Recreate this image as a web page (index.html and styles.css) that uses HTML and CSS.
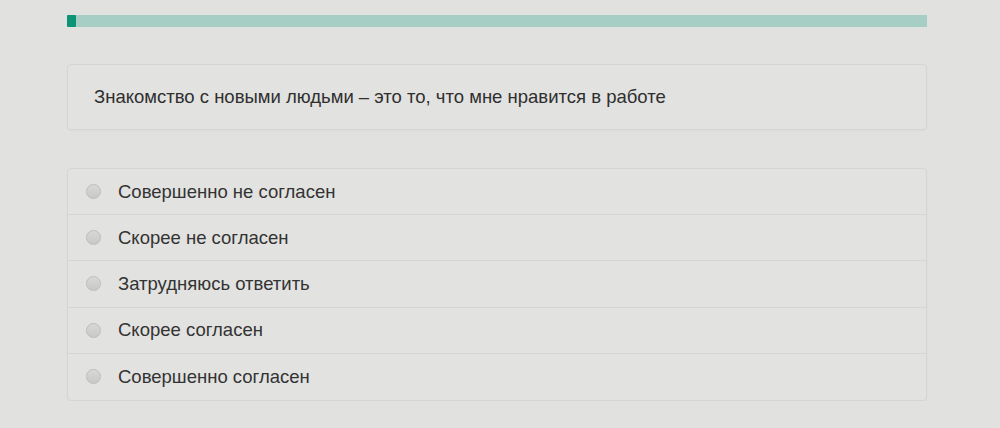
FILE: index.html
```html
<!DOCTYPE html>
<html lang="ru">
<head>
    <meta charset="UTF-8">
    <meta name="viewport" content="width=device-width, initial-scale=1.0">
    <title>Тест</title>
    <link rel="stylesheet" href="styles.css">
</head>
<body>
    <div class="main-container">
        <div class="progress">
            <div class="progress-bar" style="width: 1%"></div>
        </div>

        <div class="question container">
            Знакомство с новыми людьми – это то, что мне нравится в работе
        </div>

        <div class="answers container">
            <label class="answer"><span class="radio"></span>Совершенно не согласен</label>
            <label class="answer"><span class="radio"></span>Скорее не согласен</label>
            <label class="answer"><span class="radio"></span>Затрудняюсь ответить</label>
            <label class="answer"><span class="radio"></span>Скорее согласен</label>
            <label class="answer"><span class="radio"></span>Совершенно согласен</label>
        </div>
    </div>
</body>
</html>
```

FILE: styles.css
```css
body {
    font-family: "Liberation Sans", Arial, sans-serif;
    margin: 0;
    padding: 0;
    background-color: #e1e1df;
    color: #333;
}

.main-container {
    width: 860px;
    margin: 0 0 0 67px;
    padding-top: 15px;
}

.progress {
    height: 12px;
    background-color: #a6cec5;
    display: flex;
}

.progress-bar {
    background-color: #0c9474;
    border-radius: 1px;
    min-width: 8px;
}

.container {
    background-color: #e2e2e0;
    border: 1px solid #d5d5d3;
    border-radius: 4px;
    box-shadow: 0 1px 2px rgba(0, 0, 0, 0.03);
}

.question {
    margin-top: 37px;
    height: 66px;
    box-sizing: border-box;
    display: flex;
    align-items: center;
    padding: 0 0 0 26px;
    font-size: 18.5px;
    color: #2f2f2f;
}

.answers {
    margin-top: 38px;
    display: flex;
    flex-direction: column;
}

.answer {
    display: flex;
    align-items: center;
    height: 46.2px;
    box-sizing: border-box;
    padding-left: 18px;
    font-size: 18.5px;
    color: #333;
    border-bottom: 1.5px solid #d5d5d3;
}

.answer:last-child {
    border-bottom: none;
}

.radio {
    width: 15px;
    height: 15px;
    border-radius: 50%;
    border: 1px solid #bdbdbb;
    background: linear-gradient(#d8d8d6, #c8c8c6);
    margin-right: 17px;
    box-sizing: border-box;
}
```
